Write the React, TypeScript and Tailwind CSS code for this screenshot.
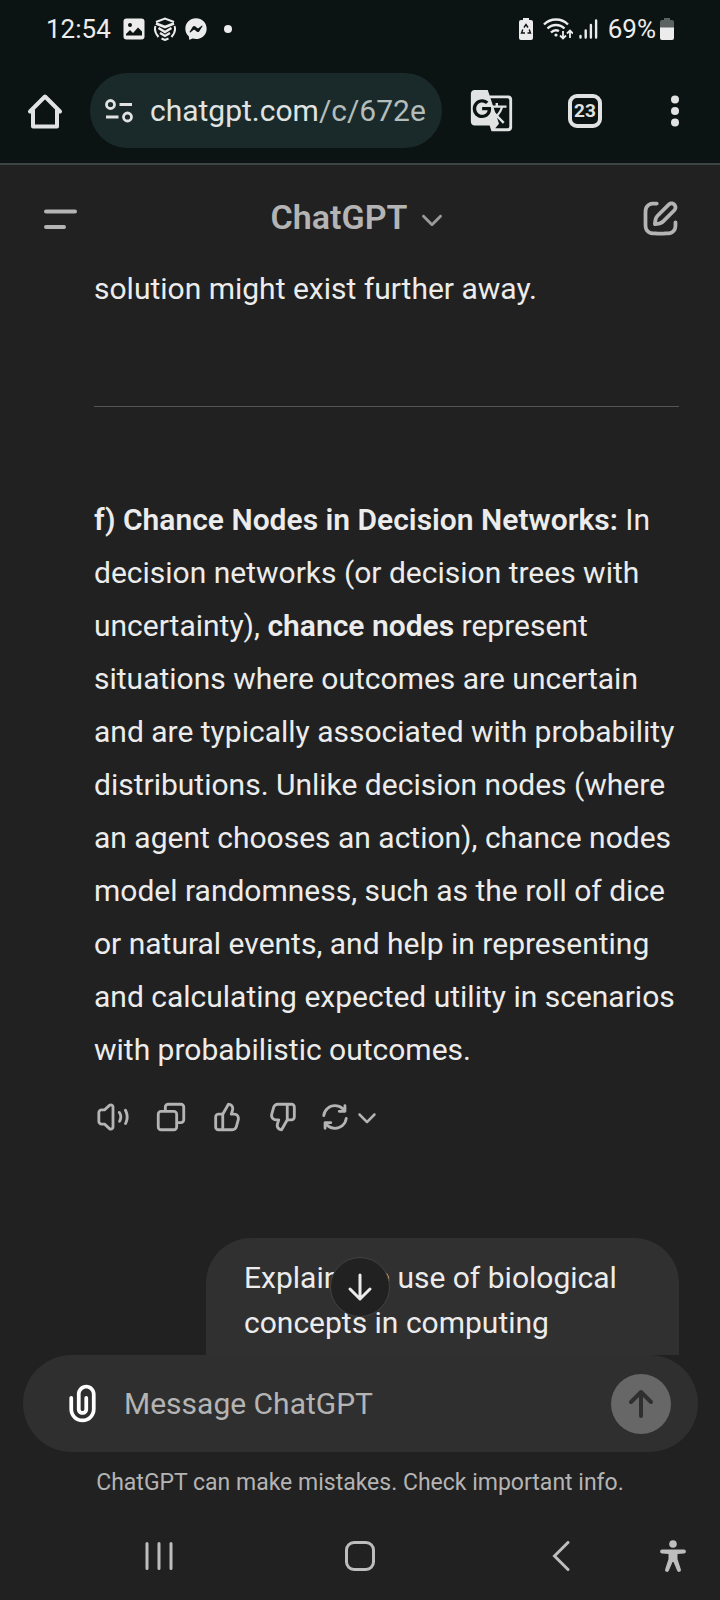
import type { ReactNode } from "react";
import { FaFacebookMessenger } from "react-icons/fa6";
import { MdGTranslate } from "react-icons/md";

function Glyph({ d, className }: { d: string; className: string }) {
  return (
    <svg viewBox="0 0 24 24" fill="currentColor" fillRule="evenodd" clipRule="evenodd" className={className} aria-hidden="true">
      <path fillRule="evenodd" d={d} />
    </svg>
  );
}

const CHEVRON =
  "M5.29289 9.29289C5.68342 8.90237 6.31658 8.90237 6.70711 9.29289L12 14.5858L17.2929 9.29289C17.6834 8.90237 18.3166 8.90237 18.7071 9.29289C19.0976 9.68342 19.0976 10.3166 18.7071 10.7071L12.7071 16.7071C12.5196 16.8946 12.2652 17 12 17C11.7348 17 11.4804 16.8946 11.2929 16.7071L5.29289 10.7071C4.90237 10.3166 4.90237 9.68342 5.29289 9.29289Z";
const COMPOSE =
  "M15.6729 3.91287C16.8918 2.69392 18.8682 2.69392 20.0871 3.91287C21.3061 5.13182 21.3061 7.10813 20.0871 8.32708L14.1499 14.2643C13.3849 15.0293 12.3925 15.5255 11.3215 15.6785L9.14142 15.9899C8.82983 16.0344 8.51546 15.9297 8.29289 15.7071C8.07033 15.4845 7.96554 15.1701 8.01005 14.8586L8.32149 12.6785C8.47449 11.6075 8.97072 10.615 9.7357 9.85006L15.6729 3.91287ZM18.6729 5.32708C18.235 4.88918 17.525 4.88918 17.0871 5.32708L11.1499 11.2643C10.6909 11.7233 10.3932 12.3187 10.3014 12.9613L10.1785 13.8215L11.0386 13.6986C11.6812 13.6068 12.2767 13.3091 12.7357 12.8501L18.6729 6.91287C19.1108 6.47497 19.1108 5.76499 18.6729 5.32708ZM11 3.99929C11.0004 4.55157 10.5531 4.99963 10.0008 5.00007C9.00227 5.00084 8.29769 5.00827 7.74651 5.06064C7.20685 5.11191 6.88488 5.20117 6.63803 5.32695C6.07354 5.61457 5.6146 6.07351 5.32698 6.63799C5.19279 6.90135 5.10062 7.24904 5.05118 7.8542C5.00078 8.47105 5 9.26336 5 10.4V13.6C5 14.7366 5.00078 15.5289 5.05118 16.1457C5.10062 16.7509 5.19279 17.0986 5.32698 17.3619C5.6146 17.9264 6.07354 18.3854 6.63803 18.673C6.90138 18.8072 7.24907 18.8993 7.85424 18.9488C8.47108 18.9992 9.26339 19 10.4 19H13.6C14.7366 19 15.5289 18.9992 16.1458 18.9488C16.7509 18.8993 17.0986 18.8072 17.362 18.673C17.9265 18.3854 18.3854 17.9264 18.673 17.3619C18.7988 17.1151 18.8881 16.7931 18.9393 16.2535C18.9917 15.7023 18.9991 14.9977 18.9999 13.9992C19.0003 13.4469 19.4484 12.9995 20.0007 13C20.553 13.0004 21.0003 13.4485 20.9999 14.0007C20.9991 14.9789 20.9932 15.7808 20.9304 16.4426C20.8664 17.116 20.7385 17.7136 20.455 18.2699C19.9757 19.2107 19.2108 19.9756 18.27 20.455C17.6777 20.7568 17.0375 20.8826 16.3086 20.9421C15.6008 21 14.7266 21 13.6428 21H10.3572C9.27339 21 8.39925 21 7.69138 20.9421C6.96253 20.8826 6.32234 20.7568 5.73005 20.455C4.78924 19.9756 4.02433 19.2107 3.54497 18.2699C3.24318 17.6776 3.11737 17.0374 3.05782 16.3086C2.99998 15.6007 2.99999 14.7266 3 13.6428V10.3572C2.99999 9.27337 2.99998 8.39922 3.05782 7.69134C3.11737 6.96249 3.24318 6.3223 3.54497 5.73001C4.02433 4.7892 4.78924 4.0243 5.73005 3.54493C6.28633 3.26149 6.88399 3.13358 7.55735 3.06961C8.21919 3.00673 9.02103 3.00083 9.99922 3.00007C10.5515 2.99964 10.9996 3.447 11 3.99929Z";
const SPEAKER =
  "M11 4.9099C11 4.47485 10.4828 4.24734 10.1621 4.54132L6.67572 7.7372C6.49129 7.90626 6.25019 8.00005 6 8.00005H4C3.44772 8.00005 3 8.44776 3 9.00005V15C3 15.5523 3.44772 16 4 16H6C6.25019 16 6.49129 16.0938 6.67572 16.2629L10.1621 19.4588C10.4828 19.7527 11 19.5252 11 19.0902V4.9099ZM8.81069 3.06701C10.4142 1.59714 13 2.73463 13 4.9099V19.0902C13 21.2655 10.4142 22.403 8.81069 20.9331L5.61102 18H4C2.34315 18 1 16.6569 1 15V9.00005C1 7.34319 2.34315 6.00005 4 6.00005H5.61102L8.81069 3.06701ZM20.3166 6.35665C20.8019 6.09313 21.409 6.27296 21.6725 6.75833C22.5191 8.3176 22.9996 10.1042 22.9996 12.0001C22.9996 13.8507 22.5418 15.5974 21.7323 17.1302C21.4744 17.6185 20.8695 17.8054 20.3811 17.5475C19.8927 17.2896 19.7059 16.6846 19.9638 16.1962C20.6249 14.9444 20.9996 13.5175 20.9996 12.0001C20.9996 10.4458 20.6064 8.98627 19.9149 7.71262C19.6514 7.22726 19.8312 6.62017 20.3166 6.35665ZM15.7994 7.90049C16.241 7.5688 16.8679 7.65789 17.1995 8.09947C18.0156 9.18593 18.4996 10.5379 18.4996 12.0001C18.4996 13.3127 18.1094 14.5372 17.4385 15.5604C17.1357 16.0222 16.5158 16.1511 16.0539 15.8483C15.5921 15.5455 15.4632 14.9255 15.766 14.4637C16.2298 13.7564 16.4996 12.9113 16.4996 12.0001C16.4996 10.9859 16.1653 10.0526 15.6004 9.30063C15.2687 8.85905 15.3578 8.23218 15.7994 7.90049Z";
const COPY =
  "M7 5C7 3.34315 8.34315 2 10 2H19C20.6569 2 22 3.34315 22 5V14C22 15.6569 20.6569 17 19 17H17V19C17 20.6569 15.6569 22 14 22H5C3.34315 22 2 20.6569 2 19V10C2 8.34315 3.34315 7 5 7H7V5ZM9 7H14C15.6569 7 17 8.34315 17 10V15H19C19.5523 15 20 14.5523 20 14V5C20 4.44772 19.5523 4 19 4H10C9.44772 4 9 4.44772 9 5V7ZM5 9C4.44772 9 4 9.44772 4 10V19C4 19.5523 4.44772 20 5 20H14C14.5523 20 15 19.5523 15 19V10C15 9.44772 14.5523 9 14 9H5Z";
const THUMB =
  "M12.1318 2.50389C12.3321 2.15338 12.7235 1.95768 13.124 2.00775L13.5778 2.06447C16.0449 2.37286 17.636 4.83353 16.9048 7.20993L16.354 8.99999H17.0722C19.7097 8.99999 21.6253 11.5079 20.9313 14.0525L19.5677 19.0525C19.0931 20.7927 17.5124 22 15.7086 22H6C4.34315 22 3 20.6568 3 19V12C3 10.3431 4.34315 8.99999 6 8.99999H8C8.25527 8.99999 8.49224 8.86498 8.61889 8.64332L12.1318 2.50389ZM10 20H15.7086C16.6105 20 17.4008 19.3964 17.6381 18.5262L19.0018 13.5262C19.3488 12.2539 18.391 11 17.0722 11H15C14.6827 11 14.3841 10.8494 14.1956 10.5941C14.0071 10.3388 13.9509 10.0092 14.0442 9.70591L14.9932 6.62175C15.3384 5.49984 14.6484 4.34036 13.5319 4.08468L10.3551 9.64418C10.248 9.83152 10.1292 10.0096 10 10.1775V20ZM8 11H6C5.44772 11 5 11.4477 5 12V19C5 19.5523 5.44772 20 6 20H8V11Z";
const REFRESH =
  "M3.07 10.876C3.623 6.436 7.41 3 12 3a9.15 9.15 0 0 1 6.012 2.254V4a1 1 0 1 1 2 0v4a1 1 0 0 1-1 1H15a1 1 0 1 1 0-2h1.957A7.15 7.15 0 0 0 12 5a7 7 0 0 0-6.946 6.124 1 1 0 1 1-1.984-.248m16.992 1.132a1 1 0 0 1 .868 1.116C20.377 17.564 16.59 21 12 21a9.15 9.15 0 0 1-6-2.244V20a1 1 0 1 1-2 0v-4a1 1 0 0 1 1-1h4a1 1 0 1 1 0 2H7.043A7.15 7.15 0 0 0 12 19a7 7 0 0 0 6.946-6.124 1 1 0 0 1 1.116-.868";
const CLIP =
  "M9 7C9 4.23858 11.2386 2 14 2C16.7614 2 19 4.23858 19 7V15C19 18.866 15.866 22 12 22C8.13401 22 5 18.866 5 15V9C5 8.44772 5.44772 8 6 8C6.55228 8 7 8.44772 7 9V15C7 17.7614 9.23858 20 12 20C14.7614 20 17 17.7614 17 15V7C17 5.34315 15.6569 4 14 4C12.3431 4 11 5.34315 11 7V15C11 15.5523 11.4477 16 12 16C12.5523 16 13 15.5523 13 15V9C13 8.44772 13.4477 8 14 8C14.5523 8 15 8.44772 15 9V15C15 16.6569 13.6569 18 12 18C10.3431 18 9 16.6569 9 15V7Z";

function IconButton({ label, className = "", children }: { label: string; className?: string; children: ReactNode }) {
  return (
    <button type="button" aria-label={label} className={`flex shrink-0 items-center justify-center ${className}`}>
      {children}
    </button>
  );
}

function StatusBar() {
  return (
    <div className="flex h-[58px] items-center justify-between px-[46px] text-[26px] leading-[30px] text-[#ececec]">
      <div className="flex items-center">
        <span>12:54</span>
        <svg viewBox="0 0 22 22" className="ml-3 size-[22px]" aria-hidden="true">
          <rect x="0.5" y="0.5" width="21" height="21" rx="3" fill="currentColor" />
          <circle cx="7" cy="7" r="2" fill="#0c1413" />
          <path d="M3 17.5V16l4-4 3 3 5-5.5 4 4v4z" fill="#0c1413" />
        </svg>
        <svg viewBox="0 0 24 24" className="ml-2 size-6" fill="none" stroke="currentColor" strokeWidth="2" aria-hidden="true">
          <path d="M3 5 12 1.500l9 3.500" />
          <path d="M3 6.500 12 10l9-3.500" strokeWidth="2.800" />
          <path d="M5.500 11 12 15l6.500-4" strokeWidth="2.400" />
          <path d="M7 16l5 3 5-3" strokeWidth="2.200" />
          <path d="M2.500 9q-2 5 3 11M21.500 9q2 5-3 11M8.500 21.500 12 23l3.500-1.500" />
        </svg>
        <FaFacebookMessenger className="ml-2 size-[22px]" />
        <span className="ml-[17px] size-2 rounded-full bg-current" />
      </div>
      <div className="flex items-center">
        <svg viewBox="0 0 14 22" className="h-[22px] w-[14px]" aria-hidden="true">
          <path d="M4 0h6v2h2a2 2 0 0 1 2 2v16a2 2 0 0 1-2 2H2a2 2 0 0 1-2-2V4a2 2 0 0 1 2-2h2z" fill="currentColor" />
          <path d="M5 9.500 7 6.500l2 3M10.200 11.500l1.300 3.500H8.500M6 15H2.500l1.300-3.500" fill="none" stroke="#0c1413" strokeWidth="1.400" />
        </svg>
        <svg viewBox="0 0 30 22" className="ml-[10px] h-[22px] w-[30px]" fill="none" stroke="currentColor" strokeWidth="2.400" aria-hidden="true">
          <path d="M1 6.500a17 17 0 0 1 24 0M4.500 10.500a12 12 0 0 1 17 0M8 14.500a7 7 0 0 1 8-1.500" />
          <circle cx="13" cy="17" r="1.600" fill="currentColor" stroke="none" />
          <path d="M20 13v7.500m-3-3 3 3 3-3M27 20v-7.500m-3 3 3-3 3 3" strokeWidth="1.800" />
        </svg>
        <svg viewBox="0 0 19 20" className="ml-[6px] h-5 w-[19px] shrink-0" stroke="currentColor" strokeWidth="2.400" strokeLinecap="round" aria-hidden="true">
          <path d="M1.500 18.500v-1.500M6.700 18.500v-7M11.900 18.500V6M17.100 18.500V1.500" />
        </svg>
        <span className="ml-[10px]">69%</span>
        <svg viewBox="0 0 14 22" className="ml-1 h-[22px] w-[14px]" aria-hidden="true">
          <path d="M4 0h6v2h2a2 2 0 0 1 2 2v6H0V4a2 2 0 0 1 2-2h2z" fill="#5c6261" />
          <path d="M0 9.500h14V20a2 2 0 0 1-2 2H2a2 2 0 0 1-2-2z" fill="currentColor" />
        </svg>
      </div>
    </div>
  );
}

function BrowserBar() {
  return (
    <div className="flex items-center px-5 py-[15px] text-[#e0e3e2]">
      <IconButton label="Home" className="size-[50px]">
        <svg viewBox="0 0 36 36" className="size-9" fill="none" stroke="currentColor" strokeWidth="4" strokeLinejoin="round" strokeLinecap="round" aria-hidden="true">
          <path d="M3 18.500 18 3.500l15 15M6 17v16.500h24V17" />
        </svg>
      </IconButton>
      <div className="ml-5 flex h-[75px] min-w-0 flex-1 items-center rounded-full bg-[#1a2a2a] px-[15px]">
        <svg viewBox="0 0 28 24" className="h-6 w-7 shrink-0" fill="none" stroke="currentColor" strokeWidth="2.800" aria-hidden="true">
          <circle cx="5.500" cy="5.500" r="4" />
          <circle cx="22.500" cy="18" r="4" />
          <path d="M14.500 5.500H27M1 18h12.500" />
        </svg>
        <div className="ml-[17px] min-w-0 flex-1 overflow-hidden text-[30px] leading-10 whitespace-nowrap">
          chatgpt.com<span className="text-[#b3bdbc]">/c/672e1</span>
        </div>
      </div>
      <IconButton label="Translate" className="ml-6 size-[50px]">
        <MdGTranslate className="size-[45px]" />
      </IconButton>
      <IconButton label="Tabs" className="ml-[44px] size-[50px]">
        <span className="flex size-[34px] items-center justify-center rounded-[9px] border-4 border-current text-[19px] leading-none font-bold">23</span>
      </IconButton>
      <IconButton label="Menu" className="ml-10 size-[50px]">
        <svg viewBox="0 0 8 32" className="h-8 w-2" fill="currentColor" aria-hidden="true">
          <circle cx="4" cy="4.500" r="4" />
          <circle cx="4" cy="16" r="4" />
          <circle cx="4" cy="27.500" r="4" />
        </svg>
      </IconButton>
    </div>
  );
}

function ChatHeader() {
  return (
    <header className="flex h-[107px] items-center justify-between px-[37px] text-[#b4b4b4]">
      <IconButton label="Open sidebar" className="size-[45px]">
        <svg viewBox="0 0 45 45" className="size-[45px]" stroke="currentColor" strokeWidth="4" strokeLinecap="round" aria-hidden="true">
          <path d="M9 15.500h29M9 31h18" />
        </svg>
      </IconButton>
      <button type="button" className="flex items-center gap-2 text-[34px] leading-10 font-semibold">
        <span className="pb-1">ChatGPT</span>
        <Glyph d={CHEVRON} className="size-[34px] text-[#9b9b9b]" />
      </button>
      <IconButton label="New chat" className="size-[45px]">
        <Glyph d={COMPOSE} className="size-[45px]" />
      </IconButton>
    </header>
  );
}

function Actions() {
  return (
    <div className="flex items-center gap-[22px] text-[#b4b4b4]">
      <IconButton label="Read aloud" className="w-[38px]"><Glyph d={SPEAKER} className="size-[34px]" /></IconButton>
      <IconButton label="Copy"><Glyph d={COPY} className="size-[34px]" /></IconButton>
      <IconButton label="Good response"><Glyph d={THUMB} className="size-[34px]" /></IconButton>
      <IconButton label="Bad response"><Glyph d={THUMB} className="size-[34px] rotate-180" /></IconButton>
      <IconButton label="Switch model" className="-ml-1">
        <Glyph d={REFRESH} className="size-[34px]" />
        <Glyph d={CHEVRON} className="size-[30px]" />
      </IconButton>
    </div>
  );
}

function Composer() {
  return (
    <form className="mr-[22px] ml-[23px] flex h-[97px] items-center rounded-full bg-[#2f2f2f] pr-[27px] pl-[37px]" onSubmit={(e) => e.preventDefault()}>
      <IconButton label="Attach file" className="text-white"><Glyph d={CLIP} className="size-[45px]" /></IconButton>
      <input
        type="text"
        aria-label="Message ChatGPT"
        placeholder="Message ChatGPT"
        className="ml-[19px] min-w-0 flex-1 bg-transparent text-[30px] leading-[45px] text-[#ececec] outline-none placeholder:text-[#b4b4b4]"
      />
      <IconButton label="Send" className="size-[60px] rounded-full bg-[#676767] text-[#2f2f2f]">
        <svg viewBox="0 0 30 30" className="size-[30px]" fill="none" stroke="currentColor" strokeWidth="4" strokeLinecap="round" strokeLinejoin="round" aria-hidden="true">
          <path d="M15 27V3M5 13 15 3l10 10" />
        </svg>
      </IconButton>
    </form>
  );
}

function SystemNav() {
  return (
    <nav className="grid h-[88px] grid-cols-[58px_202px_200px_202px_58px] items-center justify-center text-[#bdbdbd]">
      <IconButton label="Recent apps" className="col-start-2">
        <svg viewBox="0 0 28 30" className="h-[30px] w-7" stroke="currentColor" strokeWidth="3" strokeLinecap="round" aria-hidden="true">
          <path d="M2 2.500v25M14 2.500v25M26 2.500v25" />
        </svg>
      </IconButton>
      <IconButton label="Home screen">
        <span className="size-[30px] rounded-[9px] border-[3px] border-current" />
      </IconButton>
      <IconButton label="Back">
        <svg viewBox="0 0 18 30" className="h-[30px] w-[18px]" fill="none" stroke="currentColor" strokeWidth="3" strokeLinecap="round" aria-hidden="true">
          <path d="M16 1.500 2.500 15 16 28.500" />
        </svg>
      </IconButton>
      <IconButton label="Accessibility" className="pr-9">
        <svg viewBox="0 0 26 32" className="h-8 w-[26px] shrink-0" fill="currentColor" aria-hidden="true">
          <circle cx="13" cy="4" r="3.800" />
          <path d="M2 9.600h22a1.900 1.900 0 0 1 0 3.800l-6.500.6v5l3.300 10.300a1.900 1.900 0 0 1-3.700 1.200L13.500 22h-1l-3.600 8.500a1.900 1.900 0 0 1-3.700-1.200L8.500 19v-5L2 13.400a1.900 1.900 0 0 1 0-3.800z" />
        </svg>
      </IconButton>
    </nav>
  );
}

export default function App() {
  return (
    <div className="flex h-screen flex-col overflow-hidden bg-[#212121] font-['Roboto',sans-serif]">
      <div className="border-b-2 border-[#3c4444] bg-[#0c1413]">
        <StatusBar />
        <BrowserBar />
      </div>
      <ChatHeader />
      <div className="relative min-h-0 flex-1">
        <main className="h-full overflow-hidden pr-[41px] pl-[94px] text-[30px] text-[#ececec]">
          <p className="mt-[-10px] leading-[53px]">solution might exist further away.</p>
          <hr className="mt-[91px] border-[#555555]" />
          <p className="mt-[86px] leading-[53px]">
            <strong className="font-semibold">f) Chance Nodes in Decision Networks:</strong> In decision networks (or
            decision trees with uncertainty), <strong className="font-semibold">chance nodes</strong> represent
            situations where outcomes are uncertain and are typically associated with probability distributions. Unlike
            decision nodes (where an agent chooses an action), chance nodes model randomness, such as the roll of dice or
            natural events, and help in representing and calculating expected utility in scenarios with probabilistic
            outcomes.
          </p>
          <div className="mt-6">
            <Actions />
          </div>
          <div className="mt-[104px] ml-28 h-40 rounded-[45px] bg-[#303030] px-[38px] pt-[17px] leading-[45px]">
            Explain the use of biological concepts in computing
          </div>
        </main>
        <IconButton
          label="Scroll to bottom"
          className="absolute bottom-[38px] left-1/2 size-[60px] -translate-x-1/2 rounded-full border border-[#424242] bg-[#212121] text-[#ececec]"
        >
          <svg viewBox="0 0 30 30" className="size-[30px]" fill="none" stroke="currentColor" strokeWidth="3" strokeLinecap="round" strokeLinejoin="round" aria-hidden="true">
            <path d="M15 3v24M5 17l10 10 10-10" />
          </svg>
        </IconButton>
      </div>
      <Composer />
      <p className="pt-4 pb-[14px] text-center text-[23px] leading-[30px] text-[#b4b4b4]">
        ChatGPT can make mistakes. Check important info.
      </p>
      <SystemNav />
    </div>
  );
}
